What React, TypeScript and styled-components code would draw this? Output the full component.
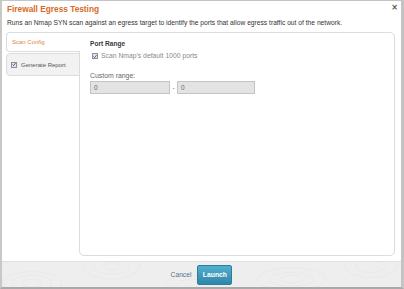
import React from "react";
import styled, { createGlobalStyle } from "styled-components";

const Global = createGlobalStyle`
  html, body { margin: 0; padding: 0; background: #ffffff; }
  body { font-family: "Liberation Sans", Arial, sans-serif; }
  * { box-sizing: border-box; }
`;

const Modal = styled.div`
  width: 404px;
  height: 289px;
  background: #ffffff;
  border-top: 1px solid #c4c4c4;
  border-left: 2px solid #c8c8c8;
  border-right: 3px solid #c4c4c4;
  border-bottom: 2px solid #a9a9a9;
  display: flex;
  flex-direction: column;
`;

const Header = styled.div`
  display: flex;
  justify-content: space-between;
  align-items: flex-start;
  padding: 3px 3px 0 5px;
`;

const Title = styled.h1`
  margin: 0;
  font-size: 8.3px;
  line-height: 11px;
  font-weight: bold;
  color: #d86a26;
`;

const Close = styled.button`
  border: none;
  background: none;
  padding: 0;
  margin: 0;
  font-family: "DejaVu Sans", sans-serif;
  font-size: 8px;
  line-height: 8px;
  font-weight: bold;
  color: #555;
  cursor: pointer;
`;

const Description = styled.p`
  margin: 4px 0 0 5px;
  font-size: 6.7px;
  line-height: 8px;
  color: #333;
`;

const Body = styled.div`
  display: flex;
  margin: 5px 0 0 4px;
  height: 224px;
`;

const TabList = styled.div`
  width: 74px;
  display: flex;
  flex-direction: column;
  gap: 1px;
  position: relative;
  z-index: 1;
  margin-right: -1px;
`;

const Tab = styled.div<{ $active?: boolean; $h: number }>`
  height: ${(p) => p.$h}px;
  display: flex;
  align-items: center;
  gap: 4px;
  padding-left: ${(p) => (p.$active ? 5 : 4)}px;
  border: 1px solid #dcdcdc;
  border-right: ${(p) => (p.$active ? "none" : "1px solid #dcdcdc")};
  border-radius: 4px 0 0 4px;
  background: ${(p) => (p.$active ? "#ffffff" : "#f2f2f2")};
  color: ${(p) => (p.$active ? "#e3843f" : "#555")};
  font-size: 6px;
`;

const Panel = styled.div`
  flex: 1;
  margin-right: 6px;
  border: 1px solid #dcdcdc;
  border-radius: 0 5px 5px 5px;
  padding: 7px 10px;
`;

const SectionTitle = styled.div`
  font-size: 6.6px;
  line-height: 8px;
  font-weight: bold;
  color: #3a3a3a;
`;

const CheckRow = styled.label`
  display: flex;
  align-items: center;
  gap: 3px;
  margin: 4px 0 0 2px;
  font-size: 6.8px;
  line-height: 8px;
  color: #8a8a8a;
`;

const Box = styled.span`
  width: 6px;
  height: 6px;
  border: 1px solid #8e8e9e;
  background: #e4e6ee;
  display: inline-flex;
  align-items: center;
  justify-content: center;
  flex: none;
`;

const FieldLabel = styled.div`
  margin-top: 12px;
  font-size: 6.9px;
  line-height: 8px;
  color: #666;
`;

const RangeRow = styled.div`
  display: flex;
  align-items: center;
  margin-top: 1px;
`;

const Input = styled.div<{ $w: number }>`
  width: ${(p) => p.$w}px;
  height: 13px;
  border: 1px solid #c4c4c4;
  background: #e3e3e3;
  font-size: 6.5px;
  color: #666;
  display: flex;
  align-items: center;
  padding-left: 3px;
`;

const Dash = styled.span`
  width: 7px;
  text-align: center;
  font-size: 6.5px;
  color: #777;
`;

const Footer = styled.div`
  margin-top: 5px;
  flex: 1;
  border-top: 1px solid #e0e0e0;
  background: #eeeeee;
  display: flex;
  align-items: center;
  justify-content: center;
  gap: 6px;
  position: relative;
  overflow: hidden;
`;

const Pattern = styled.svg`
  position: absolute;
  inset: 0;
  width: 100%;
  height: 100%;
`;

const Cancel = styled.span`
  font-size: 6.7px;
  color: #557590;
  position: relative;
`;

const Launch = styled.button`
  position: relative;
  width: 35px;
  height: 20px;
  padding: 0;
  border: 1px solid #2d7d9c;
  border-radius: 2px;
  background: linear-gradient(#52b0cf, #2f86a8);
  color: #ffffff;
  font-family: "Liberation Sans", Arial, sans-serif;
  font-size: 6.8px;
  font-weight: bold;
`;

const Check = () => (
  <svg width="5" height="5" viewBox="0 0 5 5">
    <path d="M0.6 2.6 L1.9 3.9 L4.4 0.8" stroke="#3a3a5a" strokeWidth="1" fill="none" />
  </svg>
);

const contours = [
  [30, 22, 30, 12], [30, 22, 20, 8], [30, 22, 10, 4],
  [110, 4, 28, 14], [110, 4, 18, 9], [110, 4, 8, 4],
  [190, 24, 26, 10], [190, 24, 14, 6],
  [290, 18, 34, 12], [290, 18, 22, 7], [290, 18, 11, 4],
  [370, 4, 26, 12], [370, 4, 15, 7],
];

export default function App() {
  return (
    <>
      <Global />
      <Modal>
        <Header>
          <Title>Firewall Egress Testing</Title>
          <Close>×</Close>
        </Header>
        <Description>
          Runs an Nmap SYN scan against an egress target to identify the ports that allow egress traffic out of the network.
        </Description>
        <Body>
          <TabList>
            <Tab $active $h={20}>Scan Config</Tab>
            <Tab $h={23}>
              <Box><Check /></Box>
              Generate Report
            </Tab>
          </TabList>
          <Panel>
            <SectionTitle>Port Range</SectionTitle>
            <CheckRow>
              <Box><Check /></Box>
              Scan Nmap's default 1000 ports
            </CheckRow>
            <FieldLabel>Custom range:</FieldLabel>
            <RangeRow>
              <Input $w={80}>0</Input>
              <Dash>-</Dash>
              <Input $w={78}>0</Input>
            </RangeRow>
          </Panel>
        </Body>
        <Footer>
          <Pattern viewBox="0 0 400 26" preserveAspectRatio="none">
            <g fill="none" stroke="#e6e6e6" strokeWidth="0.7">
              {contours.map(([cx, cy, rx, ry], i) => (
                <ellipse key={i} cx={cx} cy={cy} rx={rx} ry={ry} />
              ))}
            </g>
          </Pattern>
          <Cancel>Cancel</Cancel>
          <Launch>Launch</Launch>
        </Footer>
      </Modal>
    </>
  );
}
